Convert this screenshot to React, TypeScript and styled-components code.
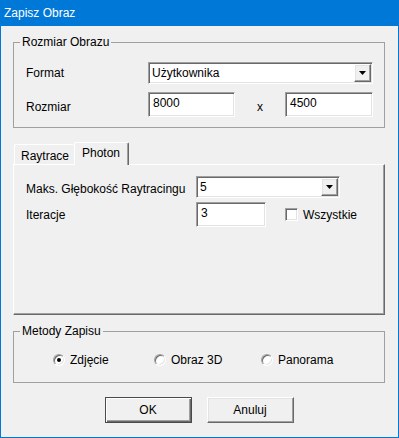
import React from "react";
import styled, { createGlobalStyle } from "styled-components";

const GlobalStyle = createGlobalStyle`
  html, body {
    margin: 0;
    padding: 0;
    background: #f0f0f0;
  }
  body {
    font-family: "Liberation Sans", Arial, sans-serif;
    font-size: 12px;
    color: #000;
  }
`;

// classic 3D edges
const sunken = `
  border: 1px solid;
  border-color: #a0a0a0 #ffffff #ffffff #a0a0a0;
  box-shadow: inset 1px 1px 0 #696969, inset -1px -1px 0 #e3e3e3;
  background: #fff;
  box-sizing: border-box;
`;

const raised = `
  border: 1px solid;
  border-color: #ffffff #696969 #696969 #ffffff;
  box-shadow: inset -1px -1px 0 #a0a0a0, inset 1px 1px 0 #e3e3e3;
  background: #f0f0f0;
  box-sizing: border-box;
`;

const Window = styled.div`
  width: 399px;
  height: 438px;
  box-sizing: border-box;
  border: 1px solid #0078d7;
  border-top: none;
  background: #f0f0f0;
  display: flex;
  flex-direction: column;
`;

const TitleBar = styled.div`
  height: 26px;
  margin: 0 -1px;
  padding-left: 4px;
  background: #0078d7;
  color: #fff;
  display: flex;
  align-items: center;
  font-size: 12px;
`;

const Content = styled.div`
  display: flex;
  flex-direction: column;
  padding: 9px 13px 0 12px;
`;

const GroupBox = styled.fieldset<{ $gap?: number }>`
  margin: 0;
  margin-top: ${(p) => p.$gap ?? 0}px;
  padding: 0;
  min-width: 0;
  border: 1px solid #a0a0a0;
`;

const Legend = styled.legend`
  margin-left: 6px;
  padding: 0 2px;
  line-height: 14px;
  font-size: 12px;
`;

const SizeGrid = styled.div`
  display: grid;
  grid-template-columns: 122px 87px 50px 88px;
  grid-template-rows: 22px 25px;
  row-gap: 8px;
  padding: 13px 0 10px 12px;
  align-items: center;
`;

const Label = styled.span<{ $drop?: number }>`
  padding-top: ${(p) => p.$drop ?? 0}px;
  white-space: nowrap;
`;

const Times = styled.span`
  justify-self: center;
  padding-top: 4px;
`;

const Combo = styled.div<{ $span?: string; $width?: number }>`
  ${sunken}
  grid-column: ${(p) => p.$span ?? "auto"};
  width: ${(p) => (p.$width ? `${p.$width}px` : "auto")};
  height: 22px;
  padding: 1px;
  display: flex;
  align-items: stretch;
`;

const ComboText = styled.span`
  flex: 1;
  padding-left: 2px;
  display: flex;
  align-items: center;
`;

const DropButton = styled.span`
  ${raised}
  width: 17px;
  display: flex;
  align-items: center;
  justify-content: center;
`;

const TextBox = styled.div<{ $width?: number }>`
  ${sunken}
  width: ${(p) => (p.$width ? `${p.$width}px` : "auto")};
  height: 25px;
  padding: 3px 0 0 4px;
  line-height: 14px;
`;

const TabsArea = styled.div`
  margin-top: 14px;
  display: flex;
  flex-direction: column;
`;

const TabStrip = styled.div`
  display: flex;
  align-items: flex-end;
  padding-left: 1px;
  height: 22px;
`;

const Tab = styled.div<{ $active?: boolean }>`
  box-sizing: border-box;
  height: ${(p) => (p.$active ? 23 : 20)}px;
  width: ${(p) => (p.$active ? 55 : 60)}px;
  margin-bottom: ${(p) => (p.$active ? -1 : 0)}px;
  padding: ${(p) => (p.$active ? "3px 0 0 7px" : "4px 0 0 6px")};
  position: relative;
  z-index: ${(p) => (p.$active ? 1 : 0)};
  background: #f0f0f0;
  border-top: 1px solid #fff;
  border-left: 1px solid #fff;
  border-right: ${(p) => (p.$active ? "1px solid #696969" : "none")};
  box-shadow: ${(p) => (p.$active ? "inset -1px 0 0 #a0a0a0" : "none")};
  border-radius: 2px 2px 0 0;
  line-height: 14px;
`;

const TabPanel = styled.div`
  box-sizing: border-box;
  height: 151px;
  border: 1px solid;
  border-color: #fff #696969 #696969 #fff;
  box-shadow: inset -1px -1px 0 #a0a0a0;
  padding: 11px 0 0 12px;
`;

const PhotonGrid = styled.div`
  display: grid;
  grid-template-columns: 170px 70px auto;
  grid-template-rows: 22px 24px;
  row-gap: 4px;
  align-items: center;
`;

const CheckLabel = styled.label`
  display: flex;
  align-items: center;
  gap: 5px;
  margin-left: 19px;
  padding-top: 1px;
`;

const CheckBox = styled.span`
  ${sunken}
  width: 13px;
  height: 13px;
`;

const RadioRow = styled.div`
  display: grid;
  grid-template-columns: 101px 107px auto;
  padding: 15px 0 15px 39px;
  height: 14px;
  align-items: center;
`;

const RadioItem = styled.label`
  display: flex;
  align-items: center;
  gap: 5px;
  line-height: 14px;
`;

const RadioDot = styled.span<{ $checked?: boolean }>`
  ${sunken}
  width: 12px;
  height: 12px;
  border-radius: 50%;
  display: flex;
  align-items: center;
  justify-content: center;

  &::after {
    content: "";
    width: 4px;
    height: 4px;
    border-radius: 50%;
    background: ${(p) => (p.$checked ? "#000" : "transparent")};
  }
`;

const ButtonRow = styled.div`
  margin-top: 14px;
  display: flex;
  justify-content: center;
  gap: 15px;
`;

const Button = styled.button<{ $default?: boolean }>`
  box-sizing: border-box;
  width: 87px;
  height: 26px;
  padding: 0;
  font-family: "Liberation Sans", Arial, sans-serif;
  font-size: 12px;
  color: #000;
  background: #f0f0f0;
  border: 1px solid;
  border-color: ${(p) =>
    p.$default ? "#4a4a4a" : "#ffffff #696969 #696969 #ffffff"};
  box-shadow: ${(p) =>
    p.$default
      ? "inset 1px 1px 0 #ffffff, inset -1px -1px 0 #696969, inset -2px -2px 0 #a0a0a0"
      : "inset -1px -1px 0 #a0a0a0, inset 1px 1px 0 #e3e3e3"};
`;

function DownArrow() {
  return (
    <svg width="7" height="4" viewBox="0 0 7 4">
      <polygon points="0,0 7,0 3.5,4" fill="#000" />
    </svg>
  );
}

function Select({ value, span, width }: { value: string; span?: string; width?: number }) {
  return (
    <Combo $span={span} $width={width}>
      <ComboText>{value}</ComboText>
      <DropButton>
        <DownArrow />
      </DropButton>
    </Combo>
  );
}

export default function App() {
  return (
    <>
      <GlobalStyle />
      <Window>
        <TitleBar>Zapisz Obraz</TitleBar>
        <Content>
          <GroupBox>
            <Legend>Rozmiar Obrazu</Legend>
            <SizeGrid>
              <Label>Format</Label>
              <Select value="Użytkownika" span="2 / span 3" />
              <Label $drop={4}>Rozmiar</Label>
              <TextBox>8000</TextBox>
              <Times>x</Times>
              <TextBox>4500</TextBox>
            </SizeGrid>
          </GroupBox>

          <TabsArea>
            <TabStrip>
              <Tab>Raytrace</Tab>
              <Tab $active>Photon</Tab>
            </TabStrip>
            <TabPanel>
              <PhotonGrid>
                <Label $drop={4}>Maks. Głębokość Raytracingu</Label>
                <Select value="5" span="2 / span 2" width={144} />
                <Label $drop={2}>Iteracje</Label>
                <TextBox $width={70}>3</TextBox>
                <CheckLabel>
                  <CheckBox />
                  Wszystkie
                </CheckLabel>
              </PhotonGrid>
            </TabPanel>
          </TabsArea>

          <GroupBox $gap={9}>
            <Legend>Metody Zapisu</Legend>
            <RadioRow>
              <RadioItem>
                <RadioDot $checked />
                Zdjęcie
              </RadioItem>
              <RadioItem>
                <RadioDot />
                Obraz 3D
              </RadioItem>
              <RadioItem>
                <RadioDot />
                Panorama
              </RadioItem>
            </RadioRow>
          </GroupBox>

          <ButtonRow>
            <Button $default>OK</Button>
            <Button>Anuluj</Button>
          </ButtonRow>
        </Content>
      </Window>
    </>
  );
}
